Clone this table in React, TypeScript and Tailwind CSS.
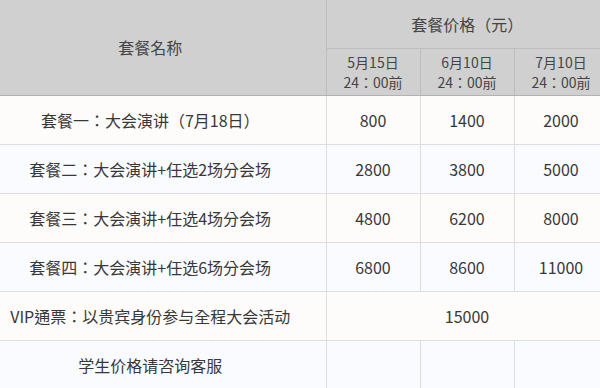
import React from "react";

const packages = [
  { name: "套餐一：大会演讲（7月18日）", prices: ["800", "1400", "2000"] },
  { name: "套餐二：大会演讲+任选2场分会场", prices: ["2800", "3800", "5000"] },
  { name: "套餐三：大会演讲+任选4场分会场", prices: ["4800", "6200", "8000"] },
  { name: "套餐四：大会演讲+任选6场分会场", prices: ["6800", "8600", "11000"] },
];

const deadlines = ["5月15日", "6月10日", "7月10日"];

function App() {
  return (
    <div
      className="w-[600px] h-[388px] overflow-hidden bg-white"
      style={{ fontFamily: '"Noto Sans CJK TC", "Noto Sans CJK SC", sans-serif' }}
    >
      <table className="ml-[-25px] w-[633px] table-fixed border-collapse text-[16px] text-[#383838]">
        <colgroup>
          <col className="w-[351px]" />
          <col className="w-[94px]" />
          <col className="w-[94px]" />
          <col className="w-[94px]" />
        </colgroup>

        {/* HEADER */}
        <thead className="bg-[#d0d0d0] text-[#444]">
          <tr className="h-[48px]">
            <th
              rowSpan={2}
              className="border-r border-b border-r-[#bdbdbd] border-b-[#b2b2b2] font-normal"
            >
              套餐名称
            </th>
            <th colSpan={3} className="border-b border-[#bdbdbd] font-normal">
              套餐价格（元）
            </th>
          </tr>
          <tr className="h-[47px]">
            {deadlines.map((d) => (
              <th
                key={d}
                className="border-r border-b border-r-[#bdbdbd] border-b-[#b2b2b2] text-[14px] leading-[20px] font-normal"
              >
                <div>{d}</div>
                <div>24：00前</div>
              </th>
            ))}
          </tr>
        </thead>

        {/* BODY */}
        <tbody>
          {packages.map((p, i) => (
            <tr
              key={p.name}
              className={`h-[49px] ${i % 2 === 0 ? "bg-[#fdfcfa]" : "bg-[#fafbfe]"}`}
            >
              <td className="border-r border-b border-[#dedede] text-center">
                {p.name}
              </td>
              {p.prices.map((price, j) => (
                <td
                  key={j}
                  className="border-r border-b border-[#dedede] text-center"
                >
                  {price}
                </td>
              ))}
            </tr>
          ))}

          <tr className="h-[49px] bg-[#fdfcfa]">
            <td className="border-r border-b border-[#dedede] text-center">
              VIP通票：以贵宾身份参与全程大会活动
            </td>
            <td colSpan={3} className="border-r border-b border-[#dedede] text-center">
              15000
            </td>
          </tr>

          <tr className="h-[49px] bg-[#fafbfe]">
            <td className="border-r border-b border-[#dedede] text-center">
              学生价格请咨询客服
            </td>
            <td className="border-r border-b border-[#dedede]" />
            <td className="border-r border-b border-[#dedede]" />
            <td className="border-r border-b border-[#dedede]" />
          </tr>
        </tbody>
      </table>
    </div>
  );
}

export default App;
